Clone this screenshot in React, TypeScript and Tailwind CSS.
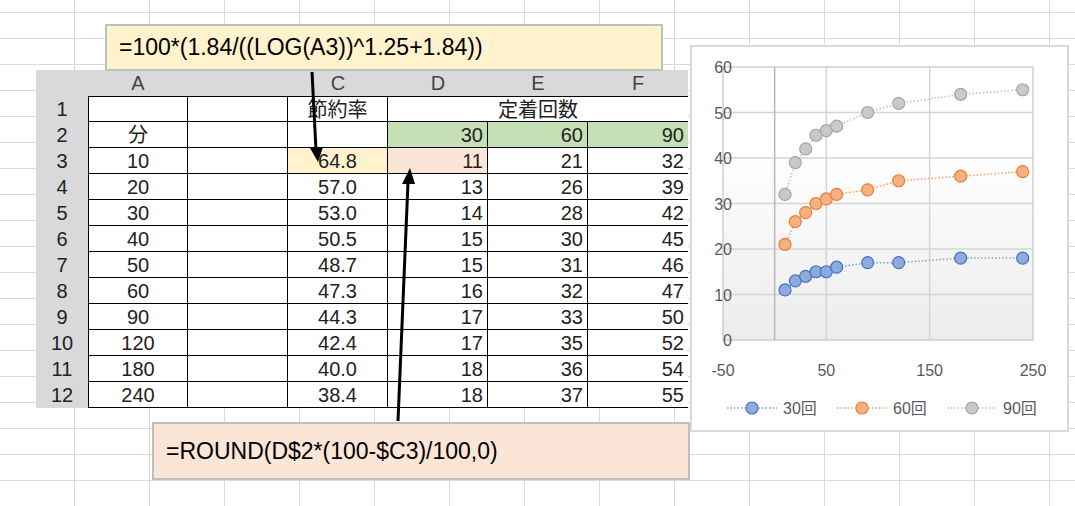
import React from 'react'

const rows = [
  { a: '10', c: '64.8', d: '11', e: '21', f: '32' },
  { a: '20', c: '57.0', d: '13', e: '26', f: '39' },
  { a: '30', c: '53.0', d: '14', e: '28', f: '42' },
  { a: '40', c: '50.5', d: '15', e: '30', f: '45' },
  { a: '50', c: '48.7', d: '15', e: '31', f: '46' },
  { a: '60', c: '47.3', d: '16', e: '32', f: '47' },
  { a: '90', c: '44.3', d: '17', e: '33', f: '50' },
  { a: '120', c: '42.4', d: '17', e: '35', f: '52' },
  { a: '180', c: '40.0', d: '18', e: '36', f: '54' },
  { a: '240', c: '38.4', d: '18', e: '37', f: '55' },
]

const xs = [10, 20, 30, 40, 50, 60, 90, 120, 180, 240]
const series = [
  { name: '30回', fill: '#8faadc', stroke: '#4472c4', line: '#7f9fd8', ys: [11, 13, 14, 15, 15, 16, 17, 17, 18, 18] },
  { name: '60回', fill: '#f4b183', stroke: '#ed7d31', line: '#f1a06b', ys: [21, 26, 28, 30, 31, 32, 33, 35, 36, 37] },
  { name: '90回', fill: '#c9c9c9', stroke: '#a5a5a5', line: '#c0c0c0', ys: [32, 39, 42, 45, 46, 47, 50, 52, 54, 55] },
]

const px = (v: number) => 31 + ((v + 50) * 310) / 300
const py = (v: number) => 293 - (v * 273) / 60

const cell = 'h-[26px] border-r border-b border-black bg-white leading-[26px]'

function Chart() {
  return (
    <svg width="375" height="383" viewBox="0 0 375 383" style={{ fontFamily: '"Liberation Sans", sans-serif' }}>
      <defs>
        <linearGradient id="pg" x1="0" y1="0" x2="0" y2="1">
          <stop offset="0.3" stopColor="#ffffff" />
          <stop offset="1" stopColor="#ececec" />
        </linearGradient>
      </defs>
      <rect x="31" y="20" width="310" height="273" fill="url(#pg)" stroke="#d0d0d0" strokeWidth="1.5" />
      {[10, 20, 30, 40, 50].map(v => (
        <line key={v} x1="31" x2="341" y1={py(v)} y2={py(v)} stroke="#d5d5d5" strokeWidth="1.5" />
      ))}
      {[50, 150].map(v => (
        <line key={v} x1={px(v)} x2={px(v)} y1="20" y2="293" stroke="#d5d5d5" strokeWidth="1.5" />
      ))}
      <line x1={px(0)} x2={px(0)} y1="20" y2="293" stroke="#b8b8b8" strokeWidth="1.5" />
      {[0, 10, 20, 30, 40, 50, 60].map(v => (
        <text key={v} x="40" y={py(v) + 6} fontSize="16" fill="#595959" textAnchor="end">{v}</text>
      ))}
      {[-50, 50, 150, 250].map(v => (
        <text key={v} x={px(v)} y="329" fontSize="16" fill="#595959" textAnchor="middle">{v}</text>
      ))}
      {series.map(s => (
        <g key={s.name}>
          <polyline points={xs.map((x, i) => `${px(x)},${py(s.ys[i])}`).join(' ')} fill="none" stroke={s.line} strokeWidth="1.5" strokeDasharray="1.5 2" />
          {xs.map((x, i) => (
            <circle key={i} cx={px(x)} cy={py(s.ys[i])} r="6" fill={s.fill} stroke={s.stroke} strokeWidth="1.2" />
          ))}
        </g>
      ))}
      {series.map((s, i) => {
        const x0 = 35 + i * 110
        return (
          <g key={s.name}>
            <line x1={x0} x2={x0 + 50} y1="361" y2="361" stroke={s.line} strokeWidth="1.5" strokeDasharray="1.5 2" />
            <circle cx={x0 + 25} cy="361" r="6" fill={s.fill} stroke={s.stroke} strokeWidth="1.2" />
            <text x={x0 + 56} y="367" fontSize="16" fill="#595959" style={{ fontFamily: '"Liberation Sans", "Noto Sans CJK JP", sans-serif' }}>{s.name}</text>
          </g>
        )
      })}
    </svg>
  )
}

export default function App() {
  return (
    <div
      className="relative w-[1075px] h-[506px] overflow-hidden bg-white bg-[repeating-linear-gradient(90deg,transparent_0,transparent_74px,#dadada_74px,#dadada_75px),repeating-linear-gradient(0deg,transparent_0,transparent_25px,#dadada_25px,#dadada_26px)]"
      style={{ fontFamily: '"Liberation Sans", "Noto Sans CJK JP", sans-serif' }}
    >
      {/* sheet */}
      <div className="absolute left-[36px] top-[70px] w-[652px] h-[338px] bg-[#d9d9d9] text-[20px] text-[#222]">
        <div className="grid grid-cols-[52px_100px_100px_100px_100px_100px_100px] h-[26px] leading-[26px] text-center text-[#444]">
          <div />
          <div>A</div>
          <div />
          <div>C</div>
          <div>D</div>
          <div>E</div>
          <div>F</div>
        </div>
        <div className="grid grid-cols-[52px_100px_100px_100px_100px_100px_100px]">
          <div className="h-[26px] leading-[26px] text-center">1</div>
          <div className={`${cell} border-l border-t`} />
          <div className={`${cell} border-t`} />
          <div className={`${cell} border-t text-center`}>節約率</div>
          <div className="col-span-3 h-[26px] leading-[26px] border-b border-t border-black bg-white text-center">定着回数</div>

          <div className="h-[26px] leading-[26px] text-center">2</div>
          <div className={`${cell} border-l text-center`}>分</div>
          <div className={cell} />
          <div className={cell} />
          <div className={`${cell} !bg-[#c5e0b4] text-right pr-1`}>30</div>
          <div className={`${cell} !bg-[#c5e0b4] text-right pr-1`}>60</div>
          <div className={`${cell} !bg-[#c5e0b4] text-right pr-1 border-r-0`}>90</div>

          {rows.map((r, i) => (
            <React.Fragment key={r.a}>
              <div className="h-[26px] leading-[26px] text-center">{i + 3}</div>
              <div className={`${cell} border-l text-center`}>{r.a}</div>
              <div className={cell} />
              <div className={`${cell} text-center ${i === 0 ? '!bg-[#fff2cc]' : ''}`}>{r.c}</div>
              <div className={`${cell} text-right pr-1 ${i === 0 ? '!bg-[#fbe5d6]' : ''}`}>{r.d}</div>
              <div className={`${cell} text-right pr-1`}>{r.e}</div>
              <div className={`${cell} text-right pr-1 border-r-0`}>{r.f}</div>
            </React.Fragment>
          ))}
        </div>
      </div>

      {/* formula boxes */}
      <div className="absolute left-[105px] top-[24px] w-[558px] h-[47px] bg-[#fff2cc] border-2 border-[#bfbfbf] pl-[12px] text-[23px] leading-[43px] text-black">
        =100*(1.84/((LOG(A3))^1.25+1.84))
      </div>
      <div className="absolute left-[152px] top-[422px] w-[538px] h-[58px] bg-[#fbe5d6] border-2 border-[#bfbfbf] pl-[12px] text-[23px] leading-[54px] text-black">
        =ROUND(D$2*(100-$C3)/100,0)
      </div>

      {/* arrows */}
      <svg className="absolute left-0 top-0" width="1075" height="506">
        <line x1="312" y1="72" x2="316" y2="150" stroke="#000" strokeWidth="3" />
        <polygon points="310,148 323,147 318,162" fill="#000" />
        <line x1="398" y1="421" x2="408" y2="182" stroke="#000" strokeWidth="3" />
        <polygon points="402,184 415,184 410,168" fill="#000" />
      </svg>

      {/* chart */}
      <div className="absolute left-[690px] top-[45px] w-[379px] h-[387px] bg-white border-2 border-[#d9d9d9]">
        <Chart />
      </div>
    </div>
  )
}
